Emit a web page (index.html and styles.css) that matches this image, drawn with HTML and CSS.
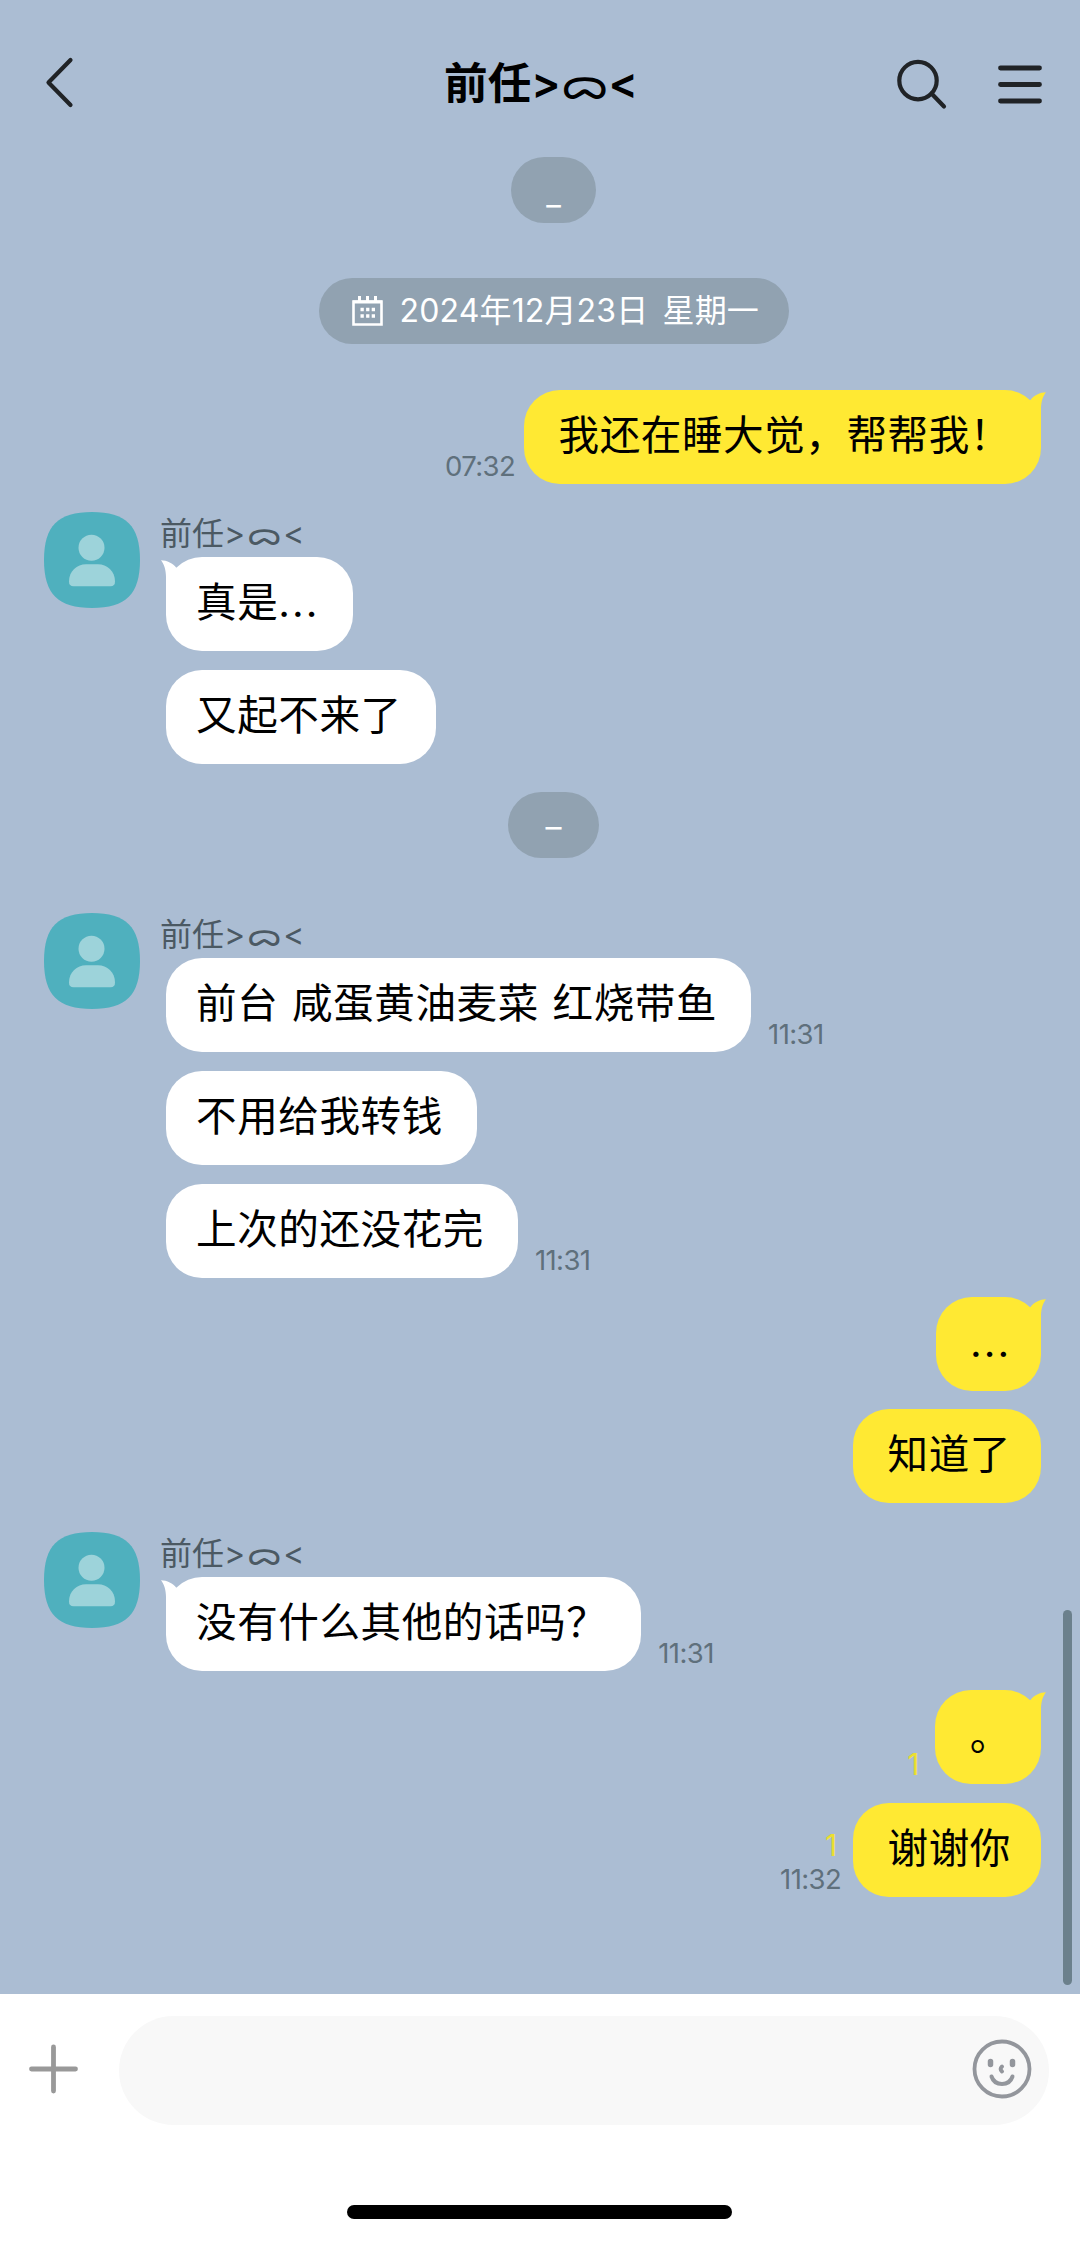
FILE: index.html
```html
<!DOCTYPE html>
<html lang="zh-CN">
<head>
<meta charset="utf-8">
<title>前任&gt;ᯅ&lt;</title>
<link rel="stylesheet" href="styles.css">
</head>
<body>
<svg class="defs" width="0" height="0" aria-hidden="true">
  <symbol id="avatar" viewBox="0 0 96 96">
    <path d="M48 0C82 0 96 14 96 48S82 96 48 96 0 82 0 48 14 0 48 0Z" fill="#4fb0be"/>
    <circle cx="47.5" cy="35.7" r="13" fill="#9dd3da"/>
    <path d="M25 69.500C25 59 33 52.300 42 52.300H54C63 52.300 71 59 71 69.500Q71 74.300 66.500 74.300H29.500Q25 74.300 25 69.500Z" fill="#9dd3da"/>
  </symbol>
  <symbol id="tail-in" viewBox="0 0 26 40"><path d="M0 .3C6 .3 12 3.500 15.500 8L26 12V40H5V17C5 10 3 4 0 .3Z" fill="#fff"/></symbol>
  <symbol id="tail-out" viewBox="0 0 26 40"><path d="M26 .3C20 .3 14 3.500 10.500 8L0 12V40H21V17C21 10 23 4 26 .3Z" fill="#ffe933"/></symbol>
</svg>
<div class="app">
  <header class="header">
    <svg class="back" width="34" height="54" viewBox="0 0 34 54"><path d="M28.500 5 6.500 27.500 28.500 50"/></svg>
    <h1 class="title">前任<span class="face">&gt;<span class="mouth">ᯅ</span>&lt;</span></h1>
    <div class="actions">
      <svg width="50" height="54" viewBox="0 0 50 54"><circle cx="26" cy="25.600" r="18.700"/><path d="M39.500 38.500 52 51.500" /></svg>
      <svg width="50" height="54" viewBox="0 0 50 54" class="menu"><path d="M2.500 13H41.500M2.500 29.500H41.500M2.500 46H41.500"/></svg>
    </div>
  </header>

  <main class="chat">
    <div class="pill pill-a">_</div>
    <div class="pill pill-date">
      <svg width="31" height="31" viewBox="0 0 31 31"><path d="M1.500 5.500H29.500V28.500H1.500Z" fill="none" stroke="#fff" stroke-width="2.600"/><path d="M1 6H30M7.500 0V6M15.500 0V6M23.500 0V6" stroke="#fff" stroke-width="3"/><path d="M8.500 13.500H23M8.500 20H23" stroke="#fff" stroke-width="3.300" stroke-dasharray="3.300 2.300"/></svg>
      <span>2024年12月23日 星期一</span>
    </div>
    <section class="mine first">
      <div class="row"><span class="time">07:32</span><div class="bubble">我还在睡大觉，帮帮我！<svg class="tail"><use href="#tail-out"/></svg></div></div>
    </section>
    <section class="theirs">
      <svg class="avatar"><use href="#avatar"/></svg>
      <div class="stack">
        <div class="name">前任<span class="face">&gt;<span class="mouth">ᯅ</span>&lt;</span></div>
        <div class="row"><div class="bubble"><svg class="tail"><use href="#tail-in"/></svg>真是<span class="dots">...</span></div></div>
        <div class="row"><div class="bubble">又起不来了</div></div>
      </div>
    </section>
    <div class="pill pill-b">–</div>
    <section class="theirs after-pill">
      <svg class="avatar"><use href="#avatar"/></svg>
      <div class="stack">
        <div class="name">前任<span class="face">&gt;<span class="mouth">ᯅ</span>&lt;</span></div>
        <div class="row"><div class="bubble">前台 咸蛋黄油麦菜 红烧带鱼</div><span class="time">11:31</span></div>
        <div class="row"><div class="bubble">不用给我转钱</div></div>
        <div class="row"><div class="bubble">上次的还没花完</div><span class="time">11:31</span></div>
      </div>
    </section>
    <section class="mine">
      <div class="row"><div class="bubble"><span class="dots">...</span><svg class="tail"><use href="#tail-out"/></svg></div></div>
      <div class="row"><div class="bubble">知道了</div></div>
    </section>
    <section class="theirs">
      <svg class="avatar"><use href="#avatar"/></svg>
      <div class="stack">
        <div class="name">前任<span class="face">&gt;<span class="mouth">ᯅ</span>&lt;</span></div>
        <div class="row"><div class="bubble"><svg class="tail"><use href="#tail-in"/></svg>没有什么其他的话吗？</div><span class="time">11:31</span></div>
      </div>
    </section>
    <section class="mine">
      <div class="row"><span class="unread">1</span><div class="bubble">。<svg class="tail"><use href="#tail-out"/></svg></div></div>
      <div class="row"><div class="meta"><span class="unread">1</span><span class="time">11:32</span></div><div class="bubble">谢谢你</div></div>
    </section>
    <div class="scrollbar"></div>
  </main>

  <footer class="footer">
    <div class="composer">
      <svg class="plus" width="50" height="50" viewBox="0 0 50 50"><path d="M24.500 3V47M2.500 25H46.500"/></svg>
      <div class="input">
        <svg width="60" height="60" viewBox="0 0 60 60"><circle cx="30" cy="30" r="27.500"/><path d="M18.500 22.500V25.500M40.500 22.500V25.500" stroke-width="5.500"/><path d="M30 27.500Q27.300 30 30 32.500M19.500 37.500Q22 45 30 45T40.500 37.500" stroke-width="4"/></svg>
      </div>
    </div>
    <div class="home"></div>
  </footer>
</div>
</body>
</html>
```
FILE: styles.css
```css
* { box-sizing: border-box; }
body {
  margin: 0;
  background: #fff;
  font-family: Inter, "Noto Sans CJK SC", sans-serif;
  color: #000;
}
.defs { position: absolute; }
.app {
  width: 1080px;
  height: 2241px;
  display: flex;
  flex-direction: column;
  background: #abbdd3;
  overflow: hidden;
}
.header {
  height: 157px;
  padding: 55px 32px 0 42px;
  display: grid;
  grid-template-columns: 150px 1fr 156px;
  align-items: start;
}
.header svg {
  display: block;
  fill: none;
  stroke: #202326;
  stroke-width: 4.2;
  stroke-linecap: round;
  stroke-linejoin: round;
  overflow: visible;
}
.header .menu { stroke-width: 4.8; }
.title {
  margin: 0 2px 0 0;
  height: 60px;
  line-height: 58px;
  text-align: center;
  font-size: 43.600px;
  font-weight: 600;
  white-space: nowrap;
}
.title .mouth { font-weight: 400; }
.actions {
  display: flex;
  justify-content: space-between;
}
.chat {
  position: relative;
  height: 1836.500px;
  display: flex;
  flex-direction: column;
}
.pill {
  margin-left: 27px;
  align-self: center;
  height: 66px;
  border-radius: 33px;
  background: #91a2b1;
  color: #fff;
  font-size: 32px;
  line-height: 68px;
  text-align: center;
}
.pill-a { width: 85px; line-height: 74px; }
.pill-b { width: 91px; margin-top: 28px; line-height: 70px; }
.pill-date {
  width: 470px;
  margin-top: 55px;
  padding-left: 33px;
  display: flex;
  align-items: center;
  gap: 17px;
  white-space: nowrap;
  word-spacing: 5px;
  letter-spacing: .15px;
}
.mine, .stack {
  display: flex;
  flex-direction: column;
  gap: 18.800px;
}
.mine {
  align-items: flex-end;
  padding-right: 39.500px;
  margin-top: 18.800px;
}
.mine.first { margin-top: 45.500px; }
.theirs {
  display: flex;
  gap: 26px;
  padding-left: 44px;
  margin-top: 28.700px;
}
.theirs.after-pill { margin-top: 55.200px; }
.avatar { width: 96px; height: 96px; flex: none; }
.name {
  height: 45px;
  margin: 0 0 -18.800px -6px;
  line-height: 43px;
  font-size: 32px;
  color: #4b5963;
  white-space: nowrap;
}
.name .face { letter-spacing: 1.500px; }
.row {
  height: 94px;
  display: flex;
  align-items: flex-end;
}
.bubble {
  position: relative;
  height: 94px;
  padding: 0 34px 0 30px;
  border-radius: 36px;
  background: #fff;
  font-size: 40.600px;
  letter-spacing: .55px;
  word-spacing: 1.800px;
  line-height: 91px;
  white-space: nowrap;
}
.mine .bubble { padding: 0 29.500px 0 34.500px; background: #ffe933; }
.tail {
  position: absolute;
  top: 2.500px;
  left: -5px;
  width: 26px;
  height: 40px;
}
.mine .tail { left: auto; right: -5px; }
.dots {
  display: inline-block;
  width: 41px;
  letter-spacing: 2px;
}
.time {
  margin: 0 17px 3px;
  font-size: 27.500px;
  letter-spacing: -.6px;
  line-height: 30px;
  color: #5f707c;
}
.mine .time { margin-right: 9px; }
.unread {
  font-size: 30px;
  line-height: 32px;
  color: #ecdf30;
  margin: 0 16px 4px 0;
}
.meta {
  display: flex;
  flex-direction: column;
  align-items: flex-end;
}
.meta .unread { margin-bottom: 3px; }
.meta .time { margin-right: 12px; }
.scrollbar {
  position: absolute;
  top: 1453px;
  right: 8px;
  width: 9px;
  height: 375px;
  border-radius: 5px;
  background: #6b808c;
}
.footer {
  flex: 1;
  background: #fff;
  padding: 22.500px 31px 0 29px;
}
.composer {
  display: flex;
  align-items: center;
  gap: 40px;
}
.composer svg { fill: none; stroke: #999; stroke-linecap: round; }
.plus { stroke-width: 4.800; margin-bottom: 3px; }
.input {
  flex: 1;
  height: 109px;
  border-radius: 55px;
  background: #f8f8f8;
  display: flex;
  align-items: center;
  justify-content: flex-end;
  padding: 0 17px 3px;
}
.composer .input svg { stroke: #93969c; stroke-width: 3.800; }
.home {
  width: 385px;
  height: 14px;
  margin: 80px auto 0;
  border-radius: 7px;
  background: #000;
}
```
